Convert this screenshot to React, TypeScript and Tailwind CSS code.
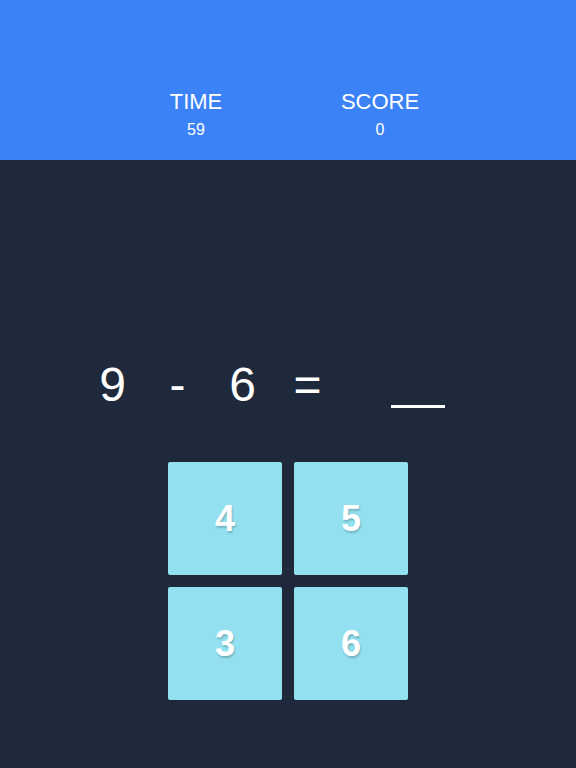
import React from 'react';

const CHOICES = [4, 5, 3, 6];

export default function App() {
  return (
    <div className="w-full min-h-[768px] bg-[#1e293b] font-['Liberation_Sans',Arial,sans-serif] text-white">
      {/* Stats bar */}
      <div className="h-[160px] bg-[#3b82f6] flex justify-center pt-[89px]">
        <div className="w-[184px] flex flex-col items-center">
          <span className="text-[22px] leading-[26px]">TIME</span>
          <span className="text-[16px] leading-[20px] mt-[5px]">59</span>
        </div>
        <div className="w-[184px] flex flex-col items-center">
          <span className="text-[22px] leading-[26px]">SCORE</span>
          <span className="text-[16px] leading-[20px] mt-[5px]">0</span>
        </div>
      </div>

      {/* Equation */}
      <div className="flex justify-center mt-[201px] h-[48px] text-[48px] leading-[48px]">
        <span className="w-[65px] text-center">9</span>
        <span className="w-[65px] text-center">-</span>
        <span className="w-[65px] text-center">6</span>
        <span className="w-[65px] text-center">=</span>
        <span className="w-[156px] flex justify-center items-end">
          <span className="block w-[54px] h-[3px] bg-white mb-[1px]" />
        </span>
      </div>

      {/* Answer tiles */}
      <div className="grid grid-cols-[114px_114px] gap-[12px] justify-center mt-[53px]">
        {CHOICES.map((n) => (
          <button
            key={n}
            type="button"
            className="h-[113px] rounded-[2px] bg-[#93e1f0] flex items-center justify-center text-[36px] font-bold text-white [text-shadow:1px_2px_2px_rgba(0,0,0,0.2)]"
          >
            {n}
          </button>
        ))}
      </div>
    </div>
  );
}
